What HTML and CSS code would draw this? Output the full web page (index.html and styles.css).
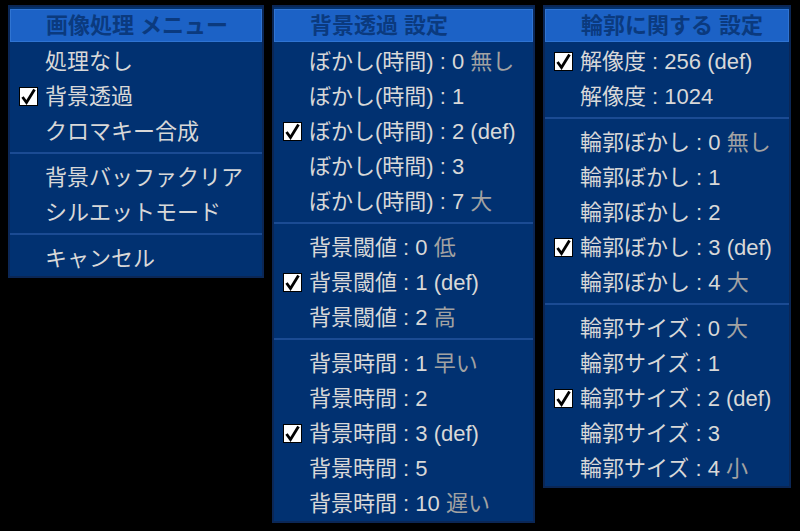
FILE: index.html
```html
<!DOCTYPE html>
<html lang="ja">
<head>
  <meta charset="UTF-8">
  <meta name="viewport" content="width=device-width, initial-scale=1.0">
  <title>画像処理 メニュー</title>
  <link rel="stylesheet" href="styles.css">
</head>
<body>
  <div class="menus">

    <div class="menu menu-main">
      <div class="menu-title">画像処理 メニュー</div>
      <div class="item">処理なし</div>
      <div class="item checked">背景透過</div>
      <div class="item">クロマキー合成</div>
      <div class="sep"></div>
      <div class="item">背景バッファクリア</div>
      <div class="item">シルエットモード</div>
      <div class="sep"></div>
      <div class="item">キャンセル</div>
    </div>

    <div class="menu menu-bg">
      <div class="menu-title">背景透過 設定</div>
      <div class="item">ぼかし(時間) : 0 <span class="dim">無し</span></div>
      <div class="item">ぼかし(時間) : 1</div>
      <div class="item checked">ぼかし(時間) : 2 (def)</div>
      <div class="item">ぼかし(時間) : 3</div>
      <div class="item">ぼかし(時間) : 7 <span class="dim">大</span></div>
      <div class="sep"></div>
      <div class="item">背景閾値 : 0 <span class="dim">低</span></div>
      <div class="item checked">背景閾値 : 1 (def)</div>
      <div class="item">背景閾値 : 2 <span class="dim">高</span></div>
      <div class="sep"></div>
      <div class="item">背景時間 : 1 <span class="dim">早い</span></div>
      <div class="item">背景時間 : 2</div>
      <div class="item checked">背景時間 : 3 (def)</div>
      <div class="item">背景時間 : 5</div>
      <div class="item">背景時間 : 10 <span class="dim">遅い</span></div>
    </div>

    <div class="menu menu-edge">
      <div class="menu-title">輪郭に関する 設定</div>
      <div class="item checked">解像度 : 256 (def)</div>
      <div class="item">解像度 : 1024</div>
      <div class="sep"></div>
      <div class="item">輪郭ぼかし : 0 <span class="dim">無し</span></div>
      <div class="item">輪郭ぼかし : 1</div>
      <div class="item">輪郭ぼかし : 2</div>
      <div class="item checked">輪郭ぼかし : 3 (def)</div>
      <div class="item">輪郭ぼかし : 4 <span class="dim">大</span></div>
      <div class="sep"></div>
      <div class="item">輪郭サイズ : 0 <span class="dim">大</span></div>
      <div class="item">輪郭サイズ : 1</div>
      <div class="item checked">輪郭サイズ : 2 (def)</div>
      <div class="item">輪郭サイズ : 3</div>
      <div class="item">輪郭サイズ : 4 <span class="dim">小</span></div>
    </div>

  </div>

  <script>
    // checkmark box for checked items
    document.querySelectorAll('.item.checked').forEach(function (item) {
      const box = document.createElement('span');
      box.className = 'check';
      box.innerHTML = '<svg width="17" height="17" viewBox="0 0 17 17"><path d="M2.5 9 L6.5 14.5 L14.5 1.5" fill="none" stroke="#000" stroke-width="2.8" stroke-linejoin="miter"/></svg>';
      item.prepend(box);
    });
  </script>
</body>
</html>
```

FILE: styles.css
```css
body {
  margin: 0;
  padding: 5px 0 0 8px;
  background-color: #000;
  font-family: 'Liberation Sans', 'Noto Sans CJK JP', sans-serif;
  font-size: 22px;
  color: #d8d8d8;
}

.menus {
  display: flex;
  align-items: flex-start;
  gap: 8px;
}

.menu {
  box-sizing: border-box;
  background-color: #013171;
  border: 2px solid #0b2756;
  padding-top: 2px;
}

.menu-main {
  width: 256px;
}

.menu-bg {
  width: 263px;
}

.menu-edge {
  width: 248px;
}

.menu-title {
  box-sizing: border-box;
  height: 33px;
  margin-bottom: 2px;
  padding: 0 0 5px 35px;
  display: flex;
  align-items: center;
  background-color: #1c62c6;
  border: 1px solid #2f74d2;
  color: #0b3a7e;
  font-weight: bold;
}

.item {
  position: relative;
  box-sizing: border-box;
  height: 35px;
  display: flex;
  align-items: center;
  padding: 0 0 5px 35px;
  white-space: pre;
}

.dim {
  color: #a2a2a2;
}

.check {
  position: absolute;
  left: 9px;
  top: 8px;
  box-sizing: border-box;
  width: 19px;
  height: 19px;
  background-color: #fff;
  border: 1px solid #000;
  display: flex;
  align-items: center;
  justify-content: center;
}

.sep {
  height: 11px;
  box-sizing: border-box;
  padding-top: 3px;
}

.sep::before {
  content: '';
  display: block;
  height: 2px;
  background-color: #1b4b93;
}
```
